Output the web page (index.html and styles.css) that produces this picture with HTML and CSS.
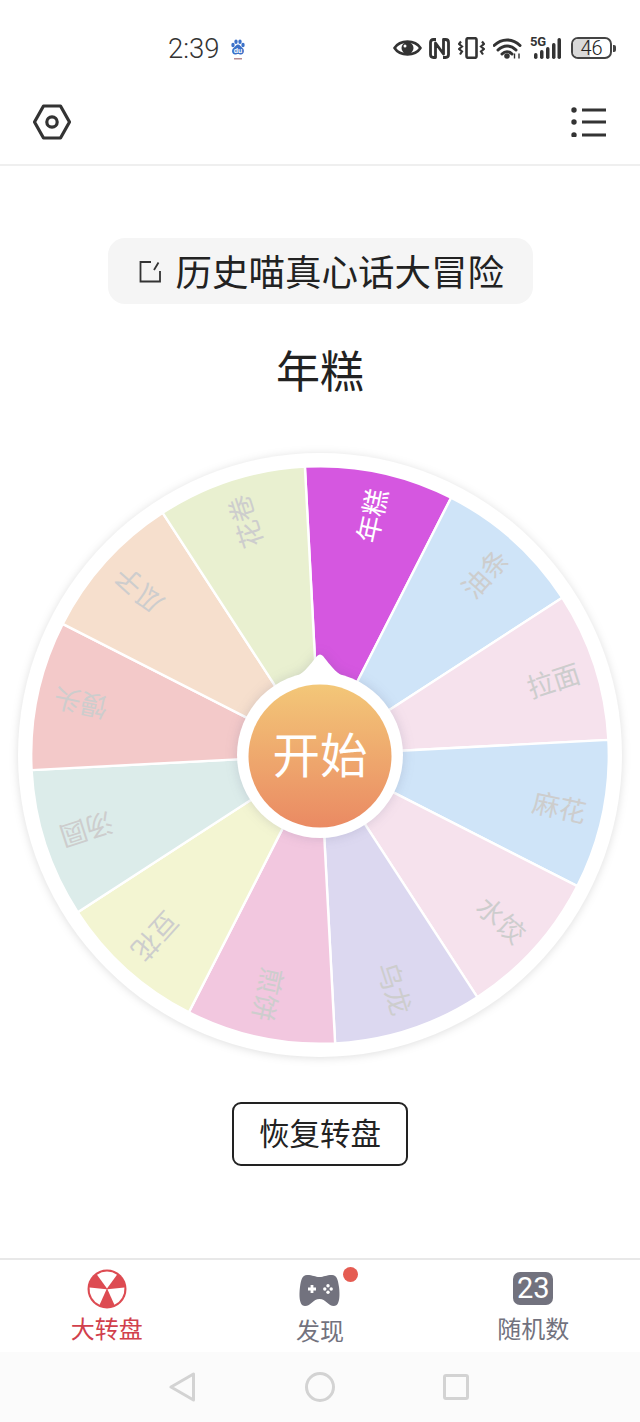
FILE: index.html
```html
<!DOCTYPE html>
<html lang="zh-CN">
<head>
<meta charset="utf-8">
<title>大转盘</title>
<link rel="stylesheet" href="styles.css">
</head>
<body>
<div class="phone">
  <header class="status">
    <span class="time">2:39</span>
    <svg class="st-paw" width="16" height="22" viewBox="0 0 16 22">
      <g class="paw">
        <ellipse cx="3" cy="6" rx="1.7" ry="2.2"/><ellipse cx="6" cy="2.8" rx="1.7" ry="2.2"/><ellipse cx="10" cy="2.8" rx="1.7" ry="2.2"/><ellipse cx="13" cy="6" rx="1.7" ry="2.2"/>
        <path d="M8 5.500C10 5.500 10.500 7.500 12.500 9C15 11 14 15.500 11 15.500C9.500 15.500 9 15 8 15C7 15 6.500 15.500 5 15.500C2 15.500 1 11 3.500 9C5.500 7.500 6 5.500 8 5.500Z"/>
      </g>
      <text class="du" x="8" y="14" text-anchor="middle">du</text>
      <rect class="paw-line" x="4" y="19" width="8" height="1.500"/>
    </svg>
    <div class="st-right">
      <svg width="29" height="20" viewBox="0 0 29 20"><path class="ln" d="M1.500 10C7 1.500 22 1.500 27.500 10C22 18.500 7 18.500 1.500 10Z"/><circle class="fl" cx="14.500" cy="10" r="6"/><circle class="wh" cx="12" cy="8" r="1.500"/></svg>
      <svg class="st-n" width="21" height="21" viewBox="0 0 21 21"><path class="ln-b" d="M7 1.500H4.500Q1.500 1.500 1.500 4.500V16.500Q1.500 19.500 4.500 19.500H6.500V5L14.500 16V1.500H16.500Q19.500 1.500 19.500 4.500V16.500Q19.500 19.500 16.500 19.500H14"/></svg>
      <svg width="27" height="22" viewBox="0 0 27 22"><rect class="ln" x="8.500" y="1.200" width="10" height="19.600" rx="1.500"/><path class="ln-t" d="M3 4.500L1 7L4 9.500L1 12L4 14.500L2 17.500M24 4.500L26 7L23 9.500L26 12L23 14.500L25 17.500"/></svg>
      <svg width="29" height="21" viewBox="0 0 29 21"><path class="ln-w" d="M1 7.500C8.500 0 19.500 0 27 7.500M5 12C10.500 6.500 17.500 6.500 23 12M9 16C12 13 16 13 19 16"/><circle class="fl" cx="14" cy="18" r="2.800"/><path class="ln-x" d="M21.500 15.500V20.500M26 15.500V20.500"/></svg>
      <div class="signal">
        <span class="five-g">5G</span>
        <svg width="27" height="21" viewBox="0 0 27 21"><rect class="fl" x="0" y="15" width="3.500" height="6" rx="1.700"/><rect class="fl" x="6" y="12" width="3.500" height="9" rx="1.700"/><rect class="fl" x="12" y="9" width="3.500" height="12" rx="1.700"/><rect class="fl" x="18" y="5" width="3.500" height="16" rx="1.700"/><rect class="fl" x="23.500" y="0" width="3.500" height="21" rx="1.700"/></svg>
      </div>
      <div class="battery">
        <div class="batt-body"><span class="batt-fill"></span><span class="batt-num">46</span></div>
        <span class="batt-tip"></span>
      </div>
    </div>
  </header>

  <nav class="toolbar">
    <svg width="38" height="36" viewBox="0 0 38 36"><path class="ic" d="M10.500 2H27.500L36.500 18L27.500 34H10.500L1.500 18Z"/><circle class="ic" cx="19" cy="18" r="5.200"/></svg>
    <svg width="35" height="30" viewBox="0 0 35 30"><g class="fl"><circle cx="3" cy="3" r="2.700"/><circle cx="3" cy="15" r="2.700"/><circle cx="3" cy="28" r="2.700"/></g><path class="ic-thin" d="M11 3H35M11 15H35M11 28H35"/></svg>
  </nav>

  <main class="main">
    <div class="pill">
      <svg width="22" height="23" viewBox="0 0 22 23"><path class="ic-edit" d="M12 2H1.500V21.500H21V11M15 10L19.500 2.500"/></svg>
      <span class="pill-text">历史喵真心话大冒险</span>
    </div>
    <h1 class="result">年糕</h1>
    <svg class="wheel" width="640" height="640" viewBox="-320 -320 640 640">
      <defs>
        <linearGradient id="btn" x1="0" y1="0" x2="0" y2="1"><stop offset="0" stop-color="#f3c778"/><stop offset="1" stop-color="#ea8a63"/></linearGradient>
        <path id="wedge" d="M0 0L-74.750 -278.960A288.800 288.800 0 0 1 74.750 -278.960Z"/>
      </defs>
      <circle class="rim" r="302"/>
      <use href="#wedge" class="seg s1" transform="rotate(12)"/>
      <use href="#wedge" class="seg s2" transform="rotate(42)"/>
      <use href="#wedge" class="seg s3" transform="rotate(72)"/>
      <use href="#wedge" class="seg s2" transform="rotate(102)"/>
      <use href="#wedge" class="seg s3" transform="rotate(132)"/>
      <use href="#wedge" class="seg s4" transform="rotate(162)"/>
      <use href="#wedge" class="seg s5" transform="rotate(192)"/>
      <use href="#wedge" class="seg s6" transform="rotate(222)"/>
      <use href="#wedge" class="seg s7" transform="rotate(252)"/>
      <use href="#wedge" class="seg s8" transform="rotate(282)"/>
      <use href="#wedge" class="seg s9" transform="rotate(312)"/>
      <use href="#wedge" class="seg s10" transform="rotate(342)"/>
      <g class="labels">
        <text class="on" transform="rotate(12) translate(0,-245) rotate(-90)">年糕</text>
        <text transform="rotate(42) translate(0,-245) rotate(-90)">油条</text>
        <text transform="rotate(72) translate(0,-245) rotate(-90)">拉面</text>
        <text transform="rotate(102) translate(0,-245) rotate(-90)">麻花</text>
        <text transform="rotate(132) translate(0,-245) rotate(-90)">水饺</text>
        <text transform="rotate(162) translate(0,-245) rotate(-90)">乌龙</text>
        <text transform="rotate(192) translate(0,-245) rotate(-90)">煎饼</text>
        <text transform="rotate(222) translate(0,-245) rotate(-90)">豆花</text>
        <text transform="rotate(252) translate(0,-245) rotate(-90)">汤圆</text>
        <text transform="rotate(282) translate(0,-245) rotate(-90)">馒头</text>
        <text transform="rotate(312) translate(0,-245) rotate(-90)">瓜子</text>
        <text transform="rotate(342) translate(0,-245) rotate(-90)">花卷</text>
      </g>
      <g class="hub">
        <circle r="83"/>
        <path d="M-25 -78C-18 -81 -14 -85 -3 -99Q0 -102 3 -99C14 -85 18 -81 25 -78Z"/>
      </g>
      <circle cy="1" r="71.500" fill="url(#btn)"/>
      <text class="start" y="-3">开始</text>
    </svg>
    <button class="restore">恢复转盘</button>
  </main>

  <footer class="tabs">
    <div class="tab tab-active">
      <svg width="40" height="40" viewBox="-20 -20 40 40"><circle class="red" r="19.500"/><g class="wh"><path d="M0 -0.500L-10 -14.300A17.500 17.500 0 0 1 10 -14.300Z"/><path d="M0 -0.500L-10 -14.300A17.500 17.500 0 0 1 10 -14.300Z" transform="rotate(120)"/><path d="M0 -0.500L-10 -14.300A17.500 17.500 0 0 1 10 -14.300Z" transform="rotate(240)"/></g></svg>
      <span class="tab-label">大转盘</span>
    </div>
    <div class="tab tab-find">
      <span class="dot"></span>
      <svg width="41" height="31" viewBox="0 0 41 31"><path class="gr" d="M8 0C14 0 16 2 20.500 2C25 2 27 0 33 0C38 0 39 5 40 12C41 20 41 31 35 31C29 31 27 24 20.500 24C14 24 12 31 6 31C0 31 0 20 1 12C2 5 3 0 8 0Z"/><path class="plus" d="M9 14H17M13 10V18"/><g class="wh"><circle cx="29" cy="10.800" r="1.700"/><circle cx="29" cy="17.200" r="1.700"/><circle cx="25.800" cy="14" r="1.700"/><circle cx="32.200" cy="14" r="1.700"/></g></svg>
      <span class="tab-label">发现</span>
    </div>
    <div class="tab tab-rand">
      <span class="num-badge">23</span>
      <span class="tab-label">随机数</span>
    </div>
  </footer>

  <div class="sysnav">
    <svg width="26" height="30" viewBox="0 0 26 30"><path class="sys" d="M24.500 2V28L2 15Z"/></svg>
    <svg width="30" height="30" viewBox="0 0 30 30"><circle class="sys" cx="15" cy="15" r="13.500"/></svg>
    <svg class="sys-square" width="26" height="26" viewBox="0 0 26 26"><rect class="sys" x="1.500" y="1.500" width="23" height="23" rx="1.500"/></svg>
  </div>
</div>
</body>
</html>
```

FILE: styles.css
```css
* { box-sizing: border-box; }
html, body { margin: 0; padding: 0; background: #fff; }
body { font-family: "Noto Sans CJK SC", "Noto Sans", sans-serif; color: #222; }
.phone { width: 640px; height: 1422px; display: flex; flex-direction: column; overflow: hidden; }

/* status bar */
.status { height: 96px; flex: none; display: flex; align-items: center; padding: 0 24px 0 168px; }
.time { font-family: Roboto, sans-serif; font-weight: 300; font-size: 27.500px; color: #333; width: 51px; white-space: nowrap; }
.st-paw { margin: 4px 0 0 11px; }
.paw { fill: #3b71c9; }
.du { font: 700 7px "Liberation Sans", sans-serif; fill: #fff; }
.paw-line { fill: #b78a90; }
.st-right { margin-left: auto; display: flex; align-items: center; gap: 8px; }
.st-n { margin-left: -1px; }
.ln { fill: none; stroke: #333; stroke-width: 2.6; stroke-linejoin: round; stroke-linecap: round; }
.ln-b { fill: none; stroke: #333; stroke-width: 2.8; stroke-linejoin: round; }
.ln-t { fill: none; stroke: #333; stroke-width: 2.2; }
.ln-w { fill: none; stroke: #333; stroke-width: 3; stroke-linecap: round; }
.ln-x { fill: none; stroke: #333; stroke-width: 1.400; }
.fl { fill: #333; }
.wh { fill: #fff; }
.signal { position: relative; width: 31px; height: 22px; display: flex; justify-content: flex-end; align-items: flex-end; }
.five-g { position: absolute; left: 0; top: -2px; font: 700 13px/13px Roboto, sans-serif; color: #333; letter-spacing: -.3px; }
.battery { display: flex; align-items: center; gap: 1px; margin-left: 2px; }
.batt-body { position: relative; width: 41px; height: 22px; border: 2px solid #444; border-radius: 7px; display: flex; align-items: center; justify-content: center; }
.batt-fill { position: absolute; left: 0; top: 0; bottom: 0; width: 46%; background: #d9d9d9; border-radius: 5px 0 0 5px; }
.batt-num { position: relative; font: 300 20px/18px Roboto, sans-serif; color: #222; }
.batt-tip { width: 3px; height: 7px; background: #444; border-radius: 0 2px 2px 0; }

/* toolbar */
.toolbar { height: 70px; flex: none; display: flex; justify-content: space-between; align-items: flex-start; padding: 8px 34px 0 33px; border-bottom: 2px solid #efefef; }
.ic { fill: none; stroke: #333; stroke-width: 3.2; stroke-linejoin: round; }
.ic-thin { fill: none; stroke: #333; stroke-width: 3; }
.toolbar svg:last-child { margin-top: 3px; }

/* main */
.main { flex: 1; display: flex; flex-direction: column; align-items: center; }
.pill { margin-top: 72px; height: 66px; width: 425px; background: #f5f5f5; border-radius: 17px; display: flex; align-items: center; padding-left: 31px; gap: 15px; }
.ic-edit { fill: none; stroke: #333; stroke-width: 1.8; }
.pill-text { font-size: 36.500px; line-height: 50px; white-space: nowrap; color: #222; }
.result { margin: 35px 0 0; font-weight: 400; font-size: 44px; line-height: 60px; color: #222; }
.wheel { display: block; margin-top: 36px; flex: none; }
.rim { fill: #fff; filter: drop-shadow(0 1px 4px rgba(0, 0, 0, .13)); }
.seg { stroke: #fff; stroke-width: 2.4; stroke-linejoin: round; }
.s1 { fill: #d557e0; }
.s2 { fill: #cfe4f8; }
.s3 { fill: #f6e2ed; }
.s4 { fill: #dcd8f0; }
.s5 { fill: #f2c7df; }
.s6 { fill: #f3f5d2; }
.s7 { fill: #dcecea; }
.s8 { fill: #f3c9c9; }
.s9 { fill: #f6dfcd; }
.s10 { fill: #e9f0d0; }
.labels text { font-size: 27px; fill: #cdcdcd; text-anchor: middle; dominant-baseline: central; }
.labels text.on { fill: #fff; }
.hub { fill: #fff; filter: drop-shadow(0 0 6px rgba(70, 70, 110, .18)); }
.start { font-size: 47.500px; fill: #fff; text-anchor: middle; dominant-baseline: central; }
.restore { margin-top: 27px; width: 176px; height: 64px; flex: none; background: #fff; border: 2px solid #222; border-radius: 9px; font: 400 30.500px/1 "Noto Sans CJK SC", sans-serif; color: #222; padding: 0 0 3px; }

/* tab bar */
.tabs { height: 94px; flex: none; display: grid; grid-template-columns: repeat(3, 1fr); border-top: 2px solid #e8e8e8; }
.tab { position: relative; display: flex; flex-direction: column; align-items: center; }
.tab-label { font-size: 24px; line-height: 30px; white-space: nowrap; color: #72727e; }
.tab-active { padding-top: 9px; }
.tab-active .tab-label { color: #d1404c; margin-top: 4px; }
.red { fill: #dd4b52; }
.tab-find { padding-top: 15px; }
.tab-find .tab-label { margin-top: 9px; }
.dot { position: absolute; left: 130px; top: 7px; width: 15px; height: 15px; border-radius: 50%; background: #e55c52; }
.gr { fill: #72727e; }
.plus { fill: none; stroke: #fff; stroke-width: 2.800; }
.tab-rand { padding-top: 12px; }
.tab-rand .tab-label { margin-top: 8px; }
.num-badge { width: 40px; height: 33px; flex: none; border-radius: 7px; background: #72727e; color: #fff; font: 400 29px/33px "Liberation Sans Narrow", Roboto, sans-serif; text-align: center; }

/* system nav */
.sysnav { height: 70px; flex: none; background: #fbfbfb; display: flex; align-items: center; gap: 110px; padding-left: 169px; }
.sys-square { margin-left: -2px; }
.sys { fill: none; stroke: #d3d3d3; stroke-width: 3; stroke-linejoin: round; }
```
